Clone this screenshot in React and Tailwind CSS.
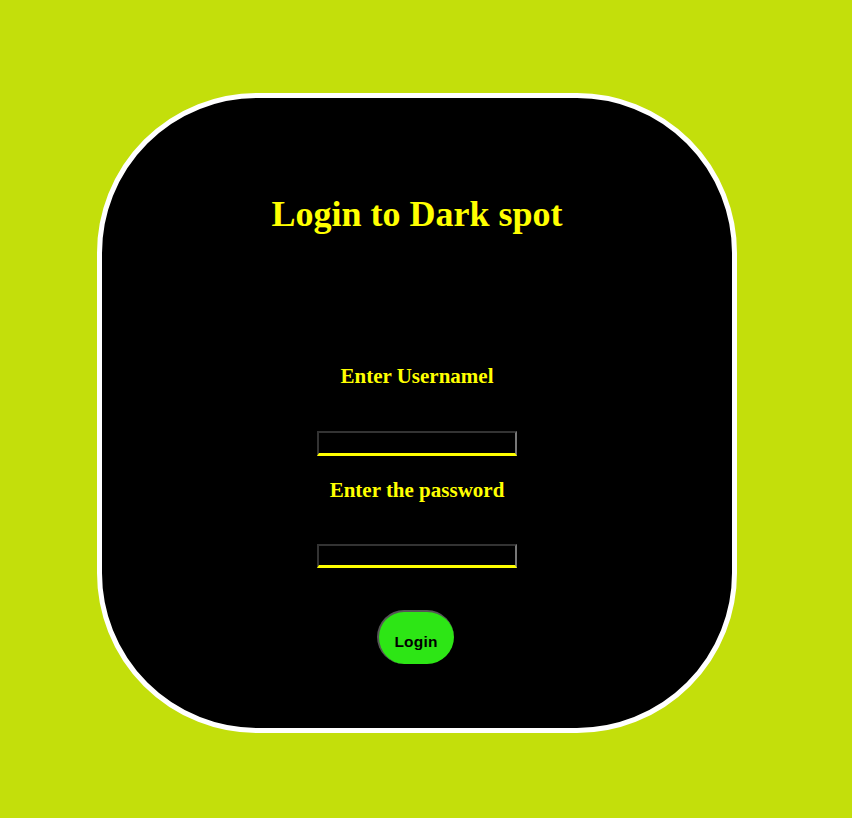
const serif = { fontFamily: '"Liberation Serif", "Times New Roman", serif' };

const inputCls =
  "w-[200px] bg-black border-t-2 border-l-2 border-r-2 border-b-[3px] border-t-[#333] border-l-[#333] border-r-[#777] border-b-[#ffff00] outline-none text-white px-1";

const App = () => {
  return (
    <div className="min-h-[818px] bg-[#c3df0b] pt-[93px] pl-[97px]">
      <div className="w-[640px] h-[640px] rounded-[160px] border-[5px] border-white bg-black flex flex-col items-center">
        <h1 className="mt-[96px] text-[36px] leading-[41px] font-bold text-[#ffff00]" style={serif}>
          Login to Dark spot
        </h1>
        <h3 className="mt-[129px] text-[21px] leading-[24px] font-bold text-[#ffff00]" style={serif}>
          Enter Usernamel
        </h3>
        <input type="text" className={`mt-[43px] h-[25px] ${inputCls}`} />
        <h3 className="mt-[22px] text-[21px] leading-[24px] font-bold text-[#ffff00]" style={serif}>
          Enter the password
        </h3>
        <input type="password" className={`mt-[42px] h-[24px] ${inputCls}`} />
        <button
          className="mt-[42px] -ml-[4px] w-[77px] h-[54px] rounded-full bg-[#2de615] border-t-2 border-l-2 border-r-0 border-b-0 border-[#555] text-black text-[15.5px] font-bold pt-[7px] tracking-[0.2px]"
          style={{ fontFamily: '"Liberation Sans", Arial, sans-serif' }}
        >
          Login
        </button>
      </div>
    </div>
  );
};

export default App;
